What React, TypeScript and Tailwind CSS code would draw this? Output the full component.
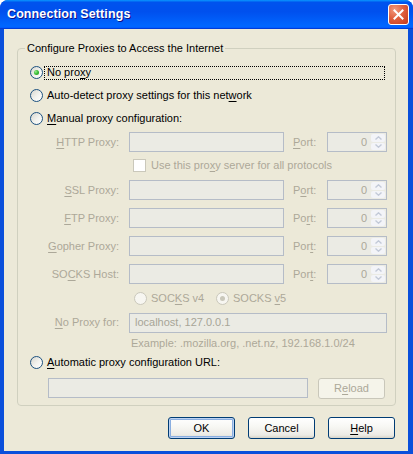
import { clsx } from "clsx";

const DISABLED = "text-[#ACA899]";

const Mn = ({ children }: { children: string }) => (
	<span className="underline underline-offset-[2px]">{children}</span>
);

const Radio = ({ checked = false, disabled = false }: { checked?: boolean; disabled?: boolean }) => (
	<span
		className={clsx(
			"flex h-[13px] w-[13px] shrink-0 items-center justify-center rounded-full border",
			disabled
				? "border-[#CAC8BB] bg-[#F7F6F1]"
				: "border-[#1C5180] bg-[linear-gradient(135deg,#D7D6CE_0%,#F3F3EF_55%,#FFFFFF_100%)]",
		)}
	>
		{checked && (
			<span
				className={clsx(
					"h-[5px] w-[5px] rounded-full",
					disabled
						? "bg-[#CAC8BB]"
						: "bg-[radial-gradient(circle_at_35%_35%,#9BEE8F_0%,#3DC13A_45%,#1E8E1C_100%)]",
				)}
			/>
		)}
	</span>
);

const TextBox = ({ className, value }: { className: string; value?: string }) => (
	<div
		className={clsx(
			"flex h-[20px] items-center border border-[#B5BCC7] bg-[#EBEBE4] pl-[5px] leading-none text-[#A7A597]",
			className,
		)}
	>
		{value}
	</div>
);

const Spin = () => (
	<div className="flex h-[20px] w-[60px] border border-[#B5BCC7] bg-[#EBEBE4]">
		<span className="flex flex-1 items-center justify-end pr-[3px] leading-none text-[#ACA899]">0</span>
		<div className="flex w-[16px] flex-col gap-[1px] p-[1px]">
			<div className="flex flex-1 items-center justify-center rounded-[2px] bg-[#F3F4F8]">
				<svg width="7" height="4" viewBox="0 0 7 4">
					<path d="M0.5 3.5 L3.5 0.8 L6.5 3.5" stroke="#C3CAD8" strokeWidth="1.4" fill="none" />
				</svg>
			</div>
			<div className="flex flex-1 items-center justify-center rounded-[2px] bg-[#F3F4F8]">
				<svg width="7" height="4" viewBox="0 0 7 4">
					<path d="M0.5 0.5 L3.5 3.2 L6.5 0.5" stroke="#C3CAD8" strokeWidth="1.4" fill="none" />
				</svg>
			</div>
		</div>
	</div>
);

const PROXY_ROWS = [
	{ pre: "", key: "S", post: "SL Proxy:", portPre: "P", portKey: "o", portPost: "rt:" },
	{ pre: "", key: "F", post: "TP Proxy:", portPre: "Po", portKey: "r", portPost: "t:" },
	{ pre: "", key: "G", post: "opher Proxy:", portPre: "Por", portKey: "t", portPost: ":" },
	{ pre: "SO", key: "C", post: "KS Host:", portPre: "Por", portKey: "t", portPost: ":" },
];

const ProxyRow = ({
	height,
	label,
	port,
}: {
	height: string;
	label: React.ReactNode;
	port: React.ReactNode;
}) => (
	<div className={clsx("flex items-center", height, DISABLED)}>
		<div className="w-[89px] text-right">{label}</div>
		<TextBox className="ml-[10px] w-[155px]" />
		<div className="ml-[9px] w-[34px]">{port}</div>
		<Spin />
	</div>
);

const XpButton = ({ children, isDefault = false }: { children: React.ReactNode; isDefault?: boolean }) => (
	<button
		type="button"
		className={clsx(
			"h-[22px] w-[67px] rounded-[3px] border border-[#003C74] bg-[linear-gradient(180deg,#FFFFFF_0%,#F7F7F3_45%,#ECEBE5_85%,#D8D4C8_100%)] text-[11px] leading-none text-black",
			isDefault && "shadow-[inset_0_0_0_1px_#BCD2F2,inset_0_0_0_2px_#8AAEE0]",
		)}
	>
		{children}
	</button>
);

export default function App() {
	return (
		<div className="flex h-[454px] w-[413px] flex-col overflow-hidden rounded-t-[8px] bg-[#0A4FDB] font-['Liberation_Sans',Arial,sans-serif] text-[11px] text-black">
			{/* title bar */}
			<div className="flex h-[29px] shrink-0 items-center justify-between bg-[linear-gradient(180deg,#0997FF_0%,#0053EE_8%,#0050EE_40%,#0066FF_88%,#0066FF_93%,#005BFF_95%,#003DD7_96%,#003DD7_100%)] pl-[7px] pr-[4px]">
				<span className="text-[12.5px] font-bold tracking-[0.1px] text-white [text-shadow:1px_1px_#0F1089]">
					Connection Settings
				</span>
				<div className="flex h-[21px] w-[21px] items-center justify-center rounded-[3px] border border-white bg-[radial-gradient(circle_at_30%_25%,#F29A7E_0%,#E0603F_45%,#C3391B_100%)]">
					<svg width="11" height="11" viewBox="0 0 11 11">
						<path d="M1.5 1.5 L9.5 9.5 M9.5 1.5 L1.5 9.5" stroke="white" strokeWidth="2" strokeLinecap="square" />
					</svg>
				</div>
			</div>

			{/* body */}
			<div className="mb-[3px] ml-[4px] mr-[5px] flex flex-1 flex-col bg-[#ECE9D8] px-[13px] pt-[13px]">
				<fieldset className="rounded-[4px] border border-[#D0D0BF] pb-[3px] pl-[12px] pr-[8px] pt-[6px]">
					<legend className="ml-[-5px] px-[2px] leading-[13px]">Configure Proxies to Access the Internet</legend>

					<div className="flex h-[23px] items-center">
						<Radio checked />
						<span className="ml-[1px] mr-[2px] flex h-[14px] flex-1 items-center border border-dotted border-black pl-[2px] leading-none">
							No pro<Mn>x</Mn>y
						</span>
					</div>
					<div className="flex h-[23px] items-center gap-[4px]">
						<Radio />
						<span>
							Auto-detect proxy settings for this net<Mn>w</Mn>ork
						</span>
					</div>
					<div className="flex h-[23px] items-center gap-[4px]">
						<Radio />
						<span>
							<Mn>M</Mn>anual proxy configuration:
						</span>
					</div>

					<ProxyRow
						height="h-[24px]"
						label={
							<>
								<Mn>H</Mn>TTP Proxy:
							</>
						}
						port={
							<>
								<Mn>P</Mn>ort:
							</>
						}
					/>

					<div className={clsx("flex h-[22px] items-center pl-[103px]", DISABLED)}>
						<span className="h-[13px] w-[13px] shrink-0 border border-[#CAC8BB] bg-white" />
						<span className="ml-[5px]">
							Use this pro<Mn>x</Mn>y server for all protocols
						</span>
					</div>

					{PROXY_ROWS.map((r) => (
						<ProxyRow
							key={r.post}
							height="h-[28px]"
							label={
								<>
									{r.pre}
									<Mn>{r.key}</Mn>
									{r.post}
								</>
							}
							port={
								<>
									{r.portPre}
									<Mn>{r.portKey}</Mn>
									{r.portPost}
								</>
							}
						/>
					))}

					<div className={clsx("flex h-[21px] items-center pl-[104px]", DISABLED)}>
						<div className="flex w-[82px] items-center gap-[4px]">
							<Radio disabled />
							<span>
								SOC<Mn>K</Mn>S v4
							</span>
						</div>
						<div className="flex items-center gap-[4px]">
							<Radio disabled checked />
							<span>
								SOCKS <Mn>v</Mn>5
							</span>
						</div>
					</div>

					<div className={clsx("flex h-[27px] items-center", DISABLED)}>
						<div className="w-[89px] text-right">
							<Mn>N</Mn>o Proxy for:
						</div>
						<TextBox className="ml-[10px] flex-1" value="localhost, 127.0.0.1" />
					</div>

					<div className={clsx("flex h-[15px] items-center pl-[101px]", DISABLED)}>
						Example: .mozilla.org, .net.nz, 192.168.1.0/24
					</div>

					<div className="flex h-[23px] items-center gap-[4px]">
						<Radio />
						<span>
							<Mn>A</Mn>utomatic proxy configuration URL:
						</span>
					</div>

					<div className="flex h-[28px] items-center pl-[18px] pr-[2px]">
						<TextBox className="w-[260px]" />
						<button
							type="button"
							className="ml-[10px] h-[21px] flex-1 rounded-[3px] border border-[#C9C7BA] bg-[#F5F4EA] leading-none text-[#ACA899]"
						>
							R<Mn>e</Mn>load
						</button>
					</div>
				</fieldset>

				<div className="mt-[11px] flex justify-end gap-[13px]">
					<XpButton isDefault>OK</XpButton>
					<XpButton>Cancel</XpButton>
					<XpButton>
						<Mn>H</Mn>elp
					</XpButton>
				</div>
			</div>
		</div>
	);
}
